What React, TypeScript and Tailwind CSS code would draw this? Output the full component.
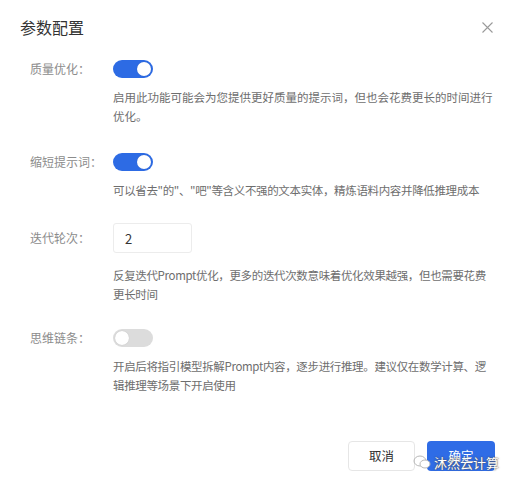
import { useState } from 'react';

const font = { fontFamily: '"Noto Sans CJK SC", "Noto Sans", sans-serif' };

function Toggle({ on, onChange }: { on: boolean; onChange: () => void }) {
  return (
    <button
      onClick={onChange}
      className={`relative flex h-[18px] w-[40px] shrink-0 items-center rounded-full px-[2px] ${
        on ? 'justify-end bg-[#2d6be4]' : 'justify-start bg-[#dcdcdc]'
      }`}
    >
      <span className="h-[14px] w-[14px] rounded-full bg-white shadow-[0_0_1px_rgba(0,0,0,0.2)]" />
    </button>
  );
}

function Row({ label, children }: { label: string; children: React.ReactNode }) {
  return (
    <div className="flex items-center">
      <span className="w-[83px] shrink-0 text-[12px] leading-[18px] text-[#8c8c8c]">{label}</span>
      {children}
    </div>
  );
}

function Desc({ children, className = '' }: { children: React.ReactNode; className?: string }) {
  return (
    <p className={`ml-[83px] whitespace-nowrap text-[11.5px] leading-[19px] text-[#6e6e6e] ${className}`}>
      {children}
    </p>
  );
}

export default function App() {
  const [quality, setQuality] = useState(true);
  const [shorten, setShorten] = useState(true);
  const [chain, setChain] = useState(false);

  return (
    <main className="relative h-[490px] w-[515px] overflow-hidden bg-white" style={font}>
      <div className="px-5 pt-[17px]">
        {/* Header */}
        <div className="flex items-center justify-between">
          <h1 className="text-[16px] leading-[20px] text-[#333]">参数配置</h1>
          <button className="mr-[2px] mt-[1px] text-[#9a9a9a]">
            <svg width="11" height="11" viewBox="0 0 11 11" fill="none" stroke="currentColor" strokeWidth="1.1">
              <path d="M0.5 0.5L10.5 10.5M10.5 0.5L0.5 10.5" />
            </svg>
          </button>
        </div>

        <div className="pl-[10px]">
          {/* 质量优化 */}
          <div className="mt-[23px]">
            <Row label="质量优化：">
              <Toggle on={quality} onChange={() => setQuality(!quality)} />
            </Row>
            <Desc className="mt-[10px]">
              启用此功能可能会为您提供更好质量的提示词，但也会花费更长的时间进行
              <br />
              优化。
            </Desc>
          </div>

          {/* 缩短提示词 */}
          <div className="mt-[27px]">
            <Row label="缩短提示词：">
              <Toggle on={shorten} onChange={() => setShorten(!shorten)} />
            </Row>
            <Desc className="mt-[10px] tracking-[-0.35px]">
              可以省去"的"、"吧"等含义不强的文本实体，精炼语料内容并降低推理成本
            </Desc>
          </div>

          {/* 迭代轮次 */}
          <div className="mt-[23px]">
            <Row label="迭代轮次：">
              <input
                defaultValue="2"
                className="h-[30px] w-[79px] rounded-[3px] border border-[#ececec] pl-[11px] text-[13px] text-[#333] outline-none"
              />
            </Row>
            <Desc className="mt-[13px] tracking-[-0.35px]">
              反复迭代Prompt优化，更多的迭代次数意味着优化效果越强，但也需要花费
              <br />
              更长时间
            </Desc>
          </div>

          {/* 思维链条 */}
          <div className="mt-[25px]">
            <Row label="思维链条：">
              <Toggle on={chain} onChange={() => setChain(!chain)} />
            </Row>
            <Desc className="mt-[10px] tracking-[-0.35px]">
              开启后将指引模型拆解Prompt内容，逐步进行推理。建议仅在数学计算、逻
              <br />
              辑推理等场景下开启使用
            </Desc>
          </div>
        </div>

        {/* Footer */}
        <div className="mt-[46px] flex justify-end gap-[12px]">
          <button className="h-[30px] w-[67px] rounded-[4px] border border-[#e6e6e6] bg-white text-[12.5px] text-[#333]">
            取消
          </button>
          <button className="h-[30px] w-[68px] rounded-[4px] bg-[#2f6ce6] text-[12.5px] text-white">确定</button>
        </div>
      </div>

      {/* Watermark */}
      <div className="pointer-events-none absolute left-[413px] top-[455px] flex items-center gap-[3px]">
        <svg width="18" height="15" viewBox="0 0 18 15" fill="none" stroke="#b8b8b8" strokeWidth="1">
          <ellipse cx="7" cy="6" rx="6" ry="5" />
          <ellipse cx="12" cy="9" rx="5" ry="4" fill="white" />
        </svg>
        <span className="text-[13px] leading-[15px] text-white [text-shadow:0_0_2px_#555,0_0_1px_#555]">沐然云计算</span>
      </div>
    </main>
  );
}
